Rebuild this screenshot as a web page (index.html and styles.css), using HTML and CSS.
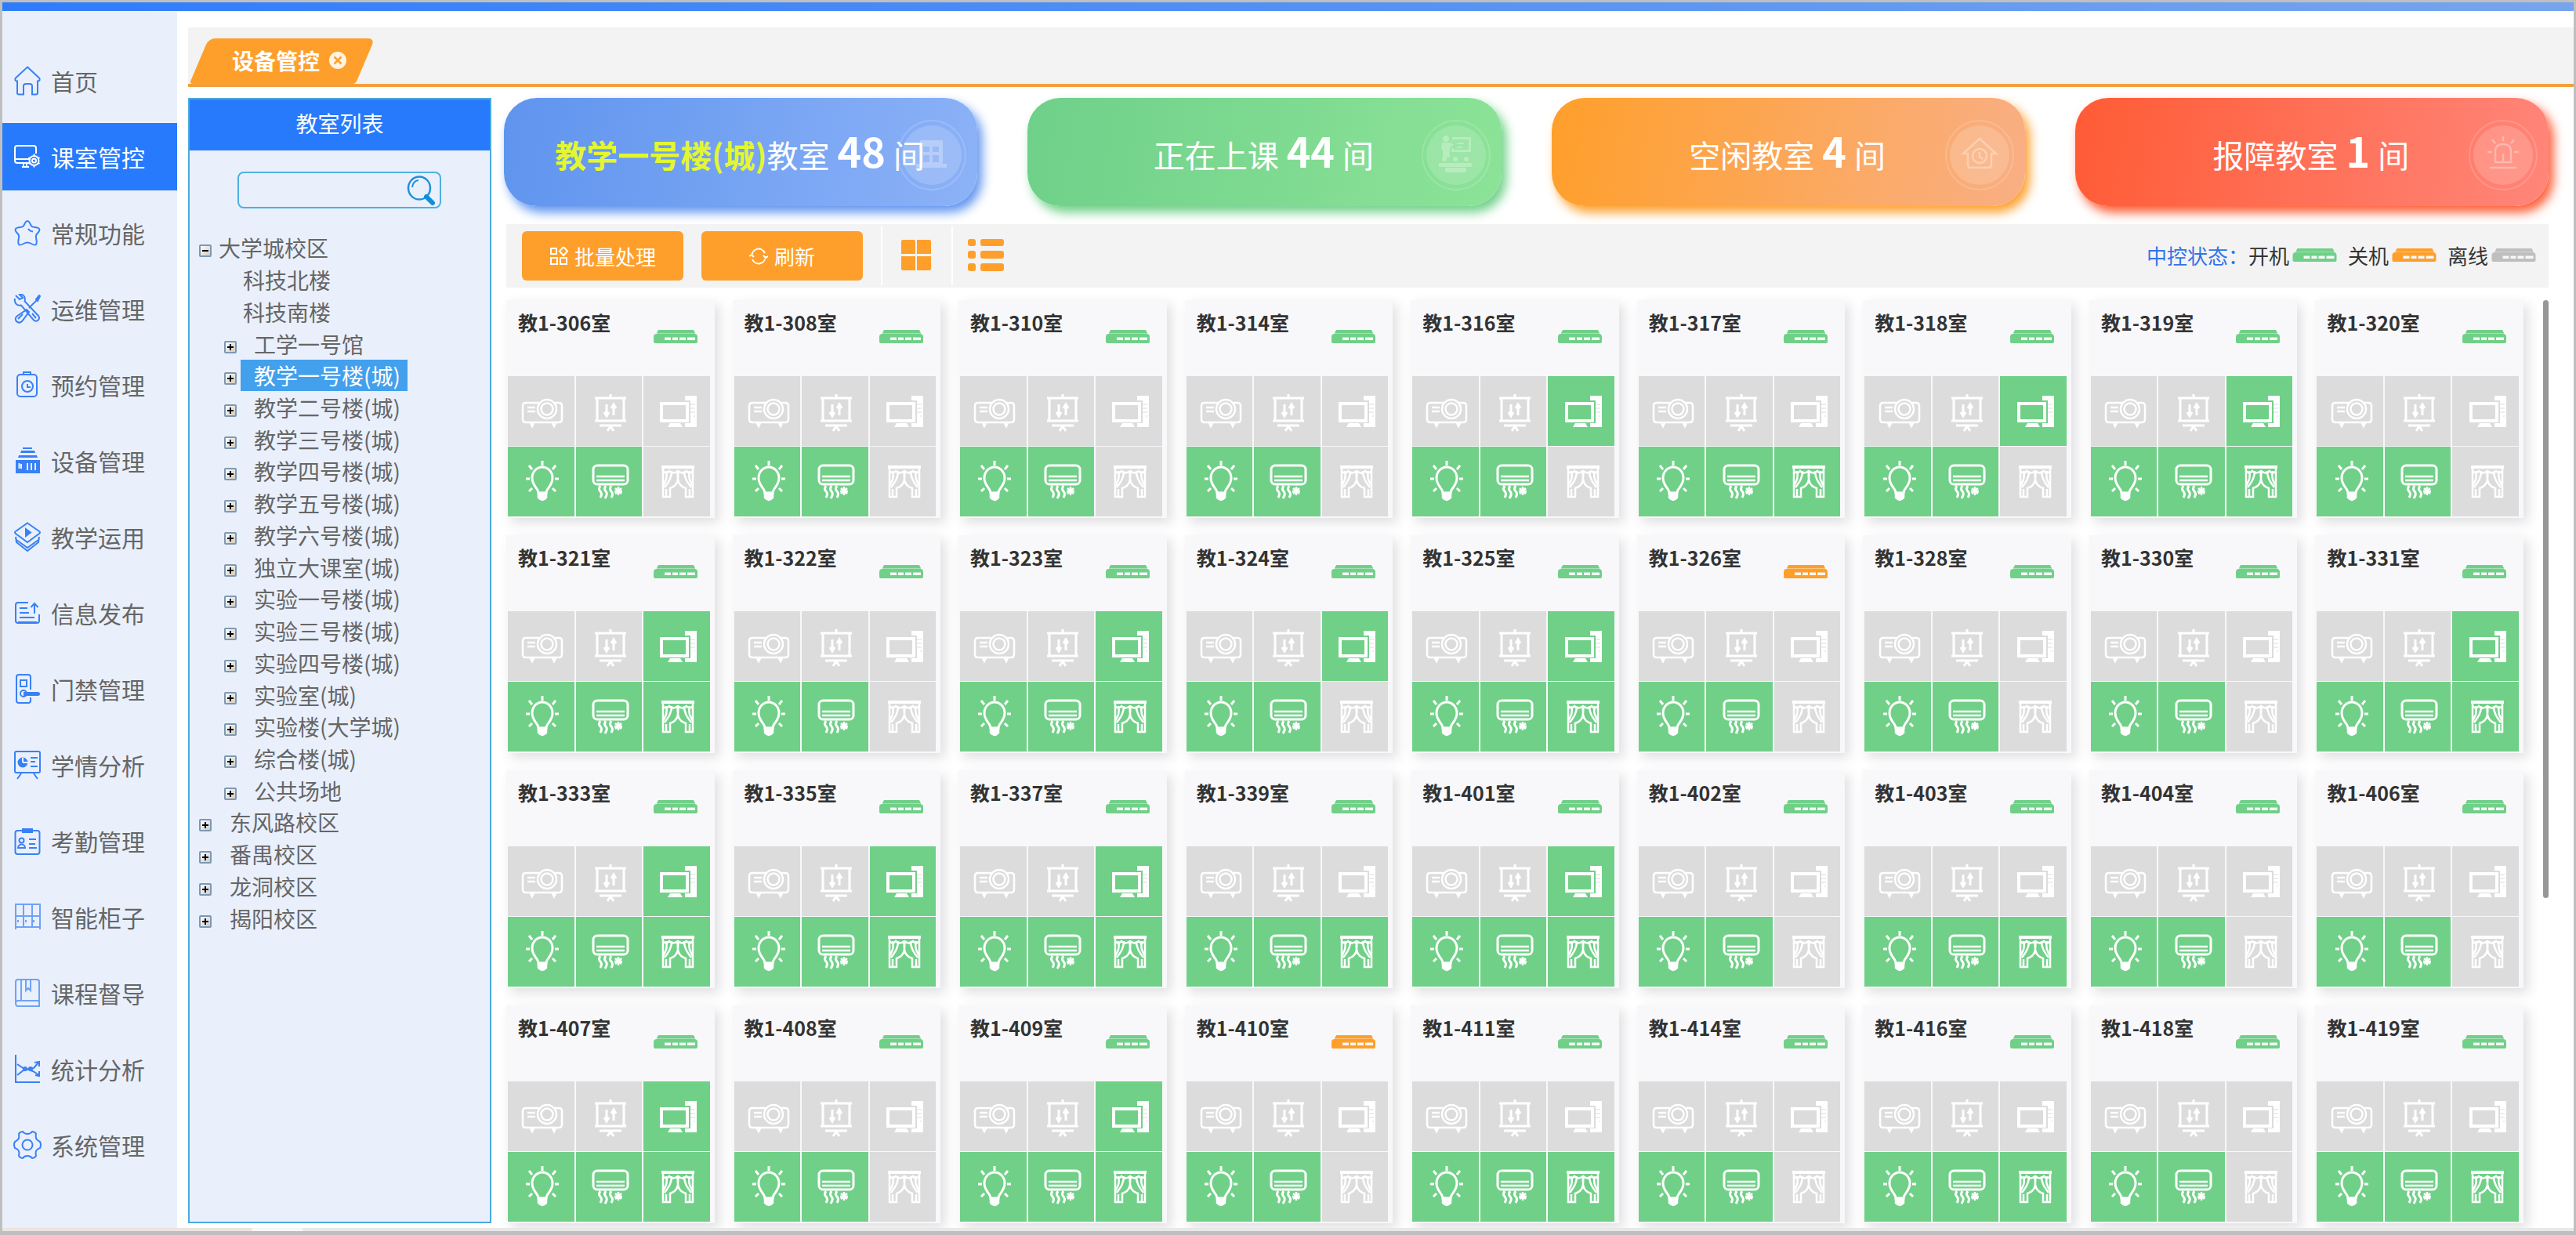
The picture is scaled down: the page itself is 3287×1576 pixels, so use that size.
FILE: index.html
```html
<!DOCTYPE html>
<html lang="zh-CN">
<head>
<meta charset="utf-8">
<title>设备管控</title>
<link rel="stylesheet" href="styles.css">
</head>
<body>
<svg class="sprite" aria-hidden="true">
  <symbol id="home" viewBox="0 0 36 38"><path d="M18 1.5 33 15.5c1.5 1.5.5 4-1.500 4H31v15q0 2-2 2h-5V26q0-3-3-3h-5q-3 0-3 3v10.500H7q-2 0-2-2v-15h-.5c-2 0-3-2.500-1.500-4z"/></symbol>
  <symbol id="control" viewBox="0 0 36 38"><path d="M21 27H5q-3 0-3-3V8q0-3 3-3h21q3 0 3 3v7M2 22h18M11 32h9M13 27v5M17 27v5"/><circle cx="26.500" cy="24" r="6"/><circle cx="26.500" cy="24" r="2.500"/><path d="M26.500 15.500v3M26.500 29.500v3M19.500 20l2 1.500M31.500 26.500l2 1.500M19.500 28l2-1.500M31.500 21.500l2-1.500"/></symbol>
  <symbol id="star" viewBox="0 0 36 38"><path d="M18 4c2 0 3 2 4.500 5.500.8 2 2 2.300 4.500 2.500 7 .5 8.500 3 3.500 8-2 2-2 3-1.500 5.500 2 9 0 11-6 7.500-3.500-2-6.500-2-10 0-6 3.500-8 1.500-6-7.500.5-2.500.5-3.500-1.500-5.500-5-5-3.500-7.500 3.500-8 2.500-.2 3.700-.5 4.500-2.500C15 6 16 4 18 4zM19 14q2 3 6 3.500"/></symbol>
  <symbol id="tools" viewBox="0 0 36 38"><path d="M3 2l5 5 4-2-4-4c4-1 8 2 6.500 8.500L32 28c3 4-2 9-6 5.500L10 14.500C4 16 1 11 2 6M33 2l-3 6-10 10M17 20l3 3-9 12c-4 4-11-1-7-6zM6 32l6-6M29 31l-5-6M33 2l1 1-3 6-2-2z"/></symbol>
  <symbol id="reserve" viewBox="0 0 36 38"><rect x="5" y="6" width="25" height="28" rx="4"/><path d="M13 6V3h9v3M18 18v4h4"/><circle cx="18" cy="21" r="7"/></symbol>
  <symbol id="device" viewBox="0 0 36 38"><path fill="currentColor" stroke="none" d="M12 2h12v2H12zM10 6h17l1 3H9zM7 12h23l1 3H6zM3 18h31v17H3z"/><path stroke="#e9f0fc" d="M10 23v6M18 22v9M23 22v9M28 22v9M7.500 22v7"/></symbol>
  <symbol id="teach" viewBox="0 0 36 38"><path d="M18 1.500 33 12q2 1.500 0 3L18 26 3 15q-2-1.500 0-3zM3 19l1 7 14 11 14-11 1-7M4 23l14 10 14-10"/><path fill="currentColor" d="m16 9 6 4.500-6 4.500z"/></symbol>
  <symbol id="publish" viewBox="0 0 36 38"><path d="M19 6H6q-3 0-3 3v20q0 3 3 3h24q3 0 3-3v-8M8 13h10M8 19h12M8 25h19M27 20V9M22.500 12l4.500-5 4.500 5M6 31h24"/></symbol>
  <symbol id="door" viewBox="0 0 36 38"><path d="M22 20V4q0-3-3-3H7Q4 1 4 4v30q0 3 3 3h12q3 0 3-3v-4"/><rect x="9" y="8" width="8" height="8"/><circle cx="13" cy="25" r="4"/><path d="M14 24h17q2 0 2 1.500t-2 1.500H14z" fill="currentColor"/></symbol>
  <symbol id="learn" viewBox="0 0 36 38"><rect x="2" y="2" width="32" height="27" rx="2"/><path d="M10 30l-5 7M26 30l5 7M22 10h9M22 15h6M22 21h9"/><circle cx="12" cy="16" r="5.500" fill="currentColor"/><path stroke="#e9f0fc" d="M12 16v-6M12 16h7"/></symbol>
  <symbol id="attend" viewBox="0 0 36 38"><rect x="2.500" y="6" width="31" height="30" rx="3"/><path d="M12 8V4h12v4zM20 17h9M20 23h8M20 28h10M6 28c0-6 9-6 9 0z"/><circle cx="10.500" cy="18.500" r="3"/></symbol>
  <symbol id="cabinet" viewBox="0 0 36 38"><path d="M3 3h31v29H3zM3 18h31M3 32v3M34 32v3M13 3v29M24 3v29M6 23v3M16 23v3M26 23v3" opacity=".7"/></symbol>
  <symbol id="course" viewBox="0 0 36 38"><path d="M3 32V5q0-3 3-3h24q3 0 3 3v31H6q-3 0-3-4 0-3 3-3h27M10 2v27M16 2v14l3-3 3 3V2" opacity=".7"/></symbol>
  <symbol id="stats" viewBox="0 0 36 38"><path d="M3 1v35h31M5 13l9 6 6 1 5 2 8 5M5 27l9-7 6-1 6-1 6-7M27 11l6-1v6M28 27l5 1v-6"/><circle cx="15" cy="19" r="2"/><circle cx="22" cy="19" r="2"/></symbol>
  <symbol id="gear" viewBox="0 0 36 38"><circle cx="18" cy="19" r="6.500"/><path d="M12 2q2 3 6 3t6-3q4 .5 5 3-1 5 1 7t4 3q2 4 0 8-3 1-4.500 3T29 33q-1 2.500-5 3-2-3-6-3t-6 3q-4-.5-5-3 1-5-.5-7T2 23q-2-4 0-8 2-1 4-3T7 5q1-2.500 5-3z"/></symbol>

  <symbol id="projector" viewBox="0 0 54 54"><path d="M23 17H6q-4 0-4 4v17q0 4 4 4h42q4 0 4-4V21q0-4-4-4h-5M8 23h10M8 28h10M12 43l2 4 2-4M40 43l2 4 2-4"/><circle cx="33" cy="25" r="12"/><circle cx="33" cy="25" r="7.500"/></symbol>
  <symbol id="screen" viewBox="0 0 54 54"><path stroke-width="3" d="M7 11h40M7 40h40M10 11v29M44 11v29M27 6v5M13 46h28"/><path d="M27 46v4M27 47l-4 6M27 47l4 6M22 19v14M19 29l3 5 3-5M31 33V19M28 24l3-5 3 5" stroke-width="3"/></symbol>
  <symbol id="pc" viewBox="0 0 54 54"><path d="M6 18h33v22H6z" stroke-width="4"/><path fill="currentColor" stroke="none" d="M17 43h13l3 5H14zM36 8h15v40H36v-5h7V14h-7z"/><path class="notch" d="M43 19h6M43 24h6M43 29h6M47 34h2"/></symbol>
  <symbol id="bulb" viewBox="0 0 54 54"><path d="M22 42c0-6-8-9-8-19a13 14 0 0 1 26 0c0 10-8 13-8 19zM27 1v6M10 7l4 5M44 7l-4 5M6 24h5M43 24h5M10 40l4-4M44 40l-4-4" stroke-width="3"/><path d="M22 42h10v6q-5 6-10 0z" fill="currentColor"/></symbol>
  <symbol id="ac" viewBox="0 0 54 54"><rect x="5" y="7" width="44" height="24" rx="5" stroke-width="3"/><path d="M9 21h36M9 26h36"/><path stroke-width="3" d="M14 33q-3 4 0 7t0 8M21 33q-3 4 0 7t-1 9M28 33q-3 4 0 7t0 8"/><path d="M37 34v11M33 36l8 7M41 36l-8 7M32 40h10"/></symbol>
  <symbol id="curtain" viewBox="0 0 54 54"><path d="M6 9h42" stroke-width="4"/><path d="M8 11v36h9V36c10-3 11-11 10-22M46 11v36h-9V36C27 33 26 25 27 14M12 14c2 8 0 12-4 19M19 14c0 9-4 14-9 21M42 14c-2 8 0 12 4 19M35 14c0 9 4 14 9 21M8 14q4 5 8 0 4 5 11 0 6 5 11 0 4 5 8 0M12 37v9M42 37v9"/></symbol>
  <symbol id="host" viewBox="0 0 56 17"><path fill="currentColor" d="M6 0h45l2 4H4z"/><path fill="currentColor" opacity=".6" d="M4 4h49v2H4z"/><path fill="currentColor" d="M4 5h48q4 0 4 4v6q0 2-2 2H2q-2 0-2-2V9q0-4 4-4z"/><path fill="#f8f8fa" d="M14 9.500h8V13h-8zM24 9.500h7V13h-7zM33 9.500h8V13h-8zM43 9.500h10V13H43z"/></symbol>
</svg>

<div class="topbar"></div>
<div class="app">
  <nav class="sidebar" aria-label="主菜单">
    <a href="#"><svg><use href="#home"/></svg>首页</a>
    <a href="#" class="active" aria-current="page"><svg><use href="#control"/></svg>课室管控</a>
    <a href="#"><svg><use href="#star"/></svg>常规功能</a>
    <a href="#"><svg><use href="#tools"/></svg>运维管理</a>
    <a href="#"><svg><use href="#reserve"/></svg>预约管理</a>
    <a href="#"><svg><use href="#device"/></svg>设备管理</a>
    <a href="#"><svg><use href="#teach"/></svg>教学运用</a>
    <a href="#"><svg><use href="#publish"/></svg>信息发布</a>
    <a href="#"><svg><use href="#door"/></svg>门禁管理</a>
    <a href="#"><svg><use href="#learn"/></svg>学情分析</a>
    <a href="#"><svg><use href="#attend"/></svg>考勤管理</a>
    <a href="#"><svg><use href="#cabinet"/></svg>智能柜子</a>
    <a href="#"><svg><use href="#course"/></svg>课程督导</a>
    <a href="#"><svg><use href="#stats"/></svg>统计分析</a>
    <a href="#"><svg><use href="#gear"/></svg>系统管理</a>
  </nav>

  <div class="main">
    <div class="tabs">
      <div class="tab">
        <span>设备管控</span>
        <button type="button" class="close" aria-label="关闭"><svg viewBox="0 0 22 22"><circle cx="11" cy="11" r="11" fill="#fff4e2"/><path d="M6.500 6.500l9 9M15.500 6.500l-9 9" stroke="#ff9f2b" stroke-width="2.500"/></svg></button>
      </div>
    </div>

    <div class="workspace">
      <aside class="panel">
        <h2>教室列表</h2>
        <form class="search" role="search">
          <input type="text" aria-label="搜索教室">
          <button type="submit" aria-label="搜索"><svg viewBox="0 0 38 38"><ellipse cx="16" cy="16" rx="14" ry="14.500" fill="none" stroke="#2090d8" stroke-width="2.500"/><path d="M7 15q1-8 8-9" fill="none" stroke="#2090d8" stroke-width="2"/><path d="M25 27l8 8" stroke="#0f8fd8" stroke-width="6" stroke-linecap="round"/></svg></button>
        </form>
        <ul class="tree">
          <li><button type="button" class="toggle open" aria-label="收起"></button><a href="#" class="tight">大学城校区</a></li>
          <li class="leaf"><a href="#">科技北楼</a></li>
          <li class="leaf"><a href="#">科技南楼</a></li>
          <li class="sub"><button type="button" class="toggle" aria-label="展开"></button><a href="#">工学一号馆</a></li>
          <li class="sub"><button type="button" class="toggle" aria-label="展开"></button><a href="#" class="selected">教学一号楼(城)</a></li>
          <li class="sub"><button type="button" class="toggle" aria-label="展开"></button><a href="#">教学二号楼(城)</a></li>
          <li class="sub"><button type="button" class="toggle" aria-label="展开"></button><a href="#">教学三号楼(城)</a></li>
          <li class="sub"><button type="button" class="toggle" aria-label="展开"></button><a href="#">教学四号楼(城)</a></li>
          <li class="sub"><button type="button" class="toggle" aria-label="展开"></button><a href="#">教学五号楼(城)</a></li>
          <li class="sub"><button type="button" class="toggle" aria-label="展开"></button><a href="#">教学六号楼(城)</a></li>
          <li class="sub"><button type="button" class="toggle" aria-label="展开"></button><a href="#">独立大课室(城)</a></li>
          <li class="sub"><button type="button" class="toggle" aria-label="展开"></button><a href="#">实验一号楼(城)</a></li>
          <li class="sub"><button type="button" class="toggle" aria-label="展开"></button><a href="#">实验三号楼(城)</a></li>
          <li class="sub"><button type="button" class="toggle" aria-label="展开"></button><a href="#">实验四号楼(城)</a></li>
          <li class="sub"><button type="button" class="toggle" aria-label="展开"></button><a href="#">实验室(城)</a></li>
          <li class="sub"><button type="button" class="toggle" aria-label="展开"></button><a href="#">实验楼(大学城)</a></li>
          <li class="sub"><button type="button" class="toggle" aria-label="展开"></button><a href="#">综合楼(城)</a></li>
          <li class="sub"><button type="button" class="toggle" aria-label="展开"></button><a href="#">公共场地</a></li>
          <li><button type="button" class="toggle" aria-label="展开"></button><a href="#">东风路校区</a></li>
          <li><button type="button" class="toggle" aria-label="展开"></button><a href="#">番禺校区</a></li>
          <li><button type="button" class="toggle" aria-label="展开"></button><a href="#">龙洞校区</a></li>
          <li><button type="button" class="toggle" aria-label="展开"></button><a href="#">揭阳校区</a></li>
        </ul>
      </aside>

      <section class="content">
        <div class="summary">
          <div class="stat blue">
            <svg class="medal" viewBox="0 0 88 90"><ellipse class="ring" cx="44" cy="45" rx="43" ry="44"/><ellipse class="disc" cx="44" cy="45" rx="38" ry="38"/><g fill="#fff" opacity=".28"><path fill-rule="evenodd" d="M29 26h29v30h5v5H24v-5h5zM33 34v7h8v-7zM45 34v7h8v-7zM33 45v9h8v-9zM45 45v9h8v-9z"/></g></svg>
            <p><b class="place">教学一号楼(城)</b>教室 <b class="num">48</b> 间</p>
          </div>
          <div class="stat green">
            <svg class="medal" viewBox="0 0 88 90"><ellipse class="ring" cx="44" cy="45" rx="43" ry="44"/><ellipse class="disc" cx="44" cy="45" rx="38" ry="38"/><g fill="#fff" opacity=".28"><circle cx="31" cy="24" r="4"/><path d="M26 29h11l4 3-5 3v13h-9V38l-2-1zM39 22h24v19H38v-5h3v2h19V25H39zM45 29h9v2h-9zM45 34h7v2h-7z"/><circle cx="29" cy="50" r="3"/><circle cx="43" cy="50" r="3"/><circle cx="57" cy="50" r="3"/><path d="M22 55h42v5H22zM30 61h27v6H30z"/></g></svg>
            <p>正在上课 <b class="num">44</b> 间</p>
          </div>
          <div class="stat orange">
            <svg class="medal" viewBox="0 0 88 90"><ellipse class="ring" cx="44" cy="45" rx="43" ry="44"/><ellipse class="disc" cx="44" cy="45" rx="38" ry="38"/><g fill="none" stroke="#fff" stroke-width="2.500" opacity=".32"><path d="M23 43l21-19 21 19h-6v14q0 4-4 4H33q-4 0-4-4V43z"/><circle cx="44" cy="46" r="9"/><path d="M44 41v6l4 3"/></g></svg>
            <p>空闲教室 <b class="num">4</b> 间</p>
          </div>
          <div class="stat red">
            <svg class="medal" viewBox="0 0 88 90"><ellipse class="ring" cx="44" cy="45" rx="43" ry="44"/><ellipse class="disc" cx="44" cy="45" rx="38" ry="38"/><g fill="none" stroke="#fff" stroke-width="2.500" opacity=".32"><path d="M34 54V40q0-9 10-9t10 9v14zM27 61h34M44 54V43M44 27v-6M34 30l-4-5M54 30l4-5M30 41h-6M58 41h6"/></g></svg>
            <p>报障教室 <b class="num">1</b> 间</p>
          </div>
        </div>

        <div class="toolbar">
          <button type="button" class="action"><svg viewBox="0 0 24 24"><path d="M2 2h7v7H2zM2 14h8v8H2zM14 14h8v8h-8zM18 0l5 5.500-5 5.500-5-5.500z"/></svg>批量处理</button>
          <button type="button" class="action"><svg viewBox="0 0 24 24"><path d="M3 12a9 10 0 0 1 17-4M21 12a9 10 0 0 1-17 4M0 12l3-2 3 3M24 12l-3 2-3-3"/></svg>刷新</button>
          <div class="views">
            <button type="button" aria-label="网格视图"><svg viewBox="0 0 46 42"><path d="M5 2h14q2 0 2 2v16H3V4q0-2 2-2zM23 2h16q2 0 2 2v16H23zM3 23h18v18H5q-2 0-2-2zM23 23h18v16q0 2-2 2H23z"/></svg></button>
            <button type="button" aria-label="列表视图"><svg viewBox="0 0 46 42"><rect x="0" y="1" width="10" height="9" rx="3"/><rect x="16" y="1" width="30" height="9" rx="3"/><rect x="0" y="16" width="10" height="10" rx="3"/><rect x="16" y="16" width="30" height="10" rx="3"/><rect x="0" y="32" width="10" height="10" rx="3"/><rect x="16" y="32" width="30" height="10" rx="3"/></svg></button>
          </div>
          <div class="legend">
            <strong>中控状态：</strong>
            <span class="on">开机<svg><use href="#host"/></svg></span>
            <span class="off">关机<svg><use href="#host"/></svg></span>
            <span class="offline">离线<svg><use href="#host"/></svg></span>
          </div>
        </div>

        <div class="scroller">
          <div class="rooms" id="rooms"></div>
          <div class="scrollbar"></div>
        </div>
      </section>
    </div>
  </div>
</div>
<div class="statusbar"></div>
<script src="rooms.js"></script>
</body>
</html>
```
FILE: styles.css
```css
* { box-sizing: border-box; }

body {
  margin: 0;
  min-height: 100vh;
  display: flex;
  flex-direction: column;
  border: 3px solid #bfbfbf;
  border-bottom-width: 5px;
  background: #fff;
  color: #333;
  font-family: "Noto Sans CJK SC", "Noto Sans", sans-serif;
}

button { padding: 0; border: 0; background: none; font: inherit; color: inherit; }
a { color: inherit; text-decoration: none; }
svg { display: block; flex: none; }
.sprite { position: absolute; width: 0; height: 0; }

.topbar { height: 11px; background: linear-gradient(90deg, #2f7cfb, #76a5ee); }
.app { flex: 1; display: flex; }
.statusbar { height: 4px; background: linear-gradient(90deg, #ece4e2 0 318px, #f8f6f6 318px 383px, #e8e8e8 383px); }

/* main menu */
.sidebar {
  width: 223px;
  flex: none;
  display: flex;
  flex-direction: column;
  gap: 11px;
  padding-top: 46px;
  background: #e9f0fc;
}
.sidebar a {
  height: 86px;
  display: flex;
  align-items: center;
  gap: 12px;
  padding-left: 14px;
  font-size: 30px;
  color: #666;
}
.sidebar svg {
  width: 36px;
  height: 38px;
  color: #3a80f5;
  fill: none;
  stroke: currentColor;
  stroke-width: 2;
}
.sidebar .active, .sidebar .active svg { color: #fff; }
.sidebar .active { background: #287afc; }

.main { flex: 1; min-width: 0; margin-left: 14px; }

/* tab strip */
.tabs {
  height: 76px;
  margin-top: 21px;
  padding: 14px 14px 0;
  display: flex;
  background: #f3f3f3;
  border-bottom: 4px solid #f2a03d;
}
.tab {
  position: relative;
  z-index: 0;
  display: flex;
  align-items: center;
  gap: 12px;
  padding: 0 24px 2px 42px;
  font-size: 28px;
  font-weight: bold;
  color: #fff;
}
.tab::before {
  content: "";
  position: absolute;
  inset: 0;
  z-index: -1;
  border-radius: 8px 8px 4px 4px;
  background: #ff9f2b;
  transform: skewX(-23deg);
}
.close svg { width: 22px; height: 22px; }

.workspace { display: flex; gap: 16px; padding: 14px 32px 6px 0; }

/* classroom tree */
.panel { width: 387px; flex: none; border: 2px solid #4aa9e0; background: #e9f0fc; }
.panel h2 {
  margin: 0;
  height: 65px;
  line-height: 60px;
  text-align: center;
  font-size: 28px;
  font-weight: normal;
  color: #fff;
  background: #287afc;
}
.search {
  width: 260px;
  height: 47px;
  margin: 27px 0 0 61px;
  display: flex;
  align-items: center;
  border: 2px solid #4fb0e0;
  border-radius: 8px;
}
.search input { flex: 1; min-width: 0; height: 40px; border: 0; outline: 0; padding: 0 8px; background: none; font: inherit; font-size: 24px; }
.search svg { width: 38px; height: 38px; margin-right: 4px; }
.tree {
  list-style: none;
  margin: 30px 0 0;
  padding: 0 0 0 12px;
  height: 896px;
  display: grid;
  grid-auto-rows: 1fr;
  font-size: 28px;
  line-height: 40px;
  color: #666;
}
.tree li { display: flex; align-items: center; gap: 15px; }
.tree a { padding: 0 8px; white-space: nowrap; }
.tree .tight { margin-left: -14px; }
.tree .sub { padding-left: 32px; gap: 5px; }
.tree .sub a { padding: 0 9px 0 17px; }
.tree .leaf { padding-left: 48px; }
.tree .selected { background: #43a0ec; color: #fff; }
.toggle {
  width: 16px;
  height: 16px;
  margin-top: 8px;
  border: 2px solid #7d98b5;
  border-radius: 2px;
  background:
    linear-gradient(#000, #000) center / 8px 2px no-repeat,
    linear-gradient(#000, #000) center / 2px 8px no-repeat,
    linear-gradient(135deg, #fff, #cfccc2);
}
.toggle.open {
  background:
    linear-gradient(#000, #000) center / 8px 2px no-repeat,
    linear-gradient(135deg, #fff, #cfccc2);
}

.content { flex: 1; min-width: 0; }

/* summary cards */
.summary { display: grid; grid-template-columns: repeat(4, 1fr); gap: 64px; }
.stat {
  position: relative;
  height: 138px;
  display: flex;
  align-items: center;
  justify-content: center;
  border-radius: 42px;
  color: #fff;
  font-size: 40px;
}
.stat p { position: relative; margin: 0; padding-right: 2px; line-height: 60px; white-space: nowrap; }
.stat .num { margin: 0 1px; font-size: 52px; line-height: 60px; }
.stat .place { color: #e3f632; }
.medal { position: absolute; right: 14px; top: 28px; width: 88px; height: 90px; }
.medal .ring { fill: none; stroke: #fff; stroke-width: 2; opacity: .16; }
.medal .disc { fill: #fff; opacity: .16; }
.blue { background: linear-gradient(100deg, #5f94ee, #8cb2f7); box-shadow: 6px 8px 14px #5f94ee; }
.green { background: linear-gradient(100deg, #6fd089, #8ce398); box-shadow: 6px 8px 14px #6fd089; }
.orange { background: linear-gradient(100deg, #ff9f2b, #f9af85); box-shadow: 6px 8px 14px #ff9f2b; }
.red { background: linear-gradient(100deg, #ff5b35, #ff867a); box-shadow: 6px 8px 14px #ff5b35; }

/* toolbar */
.toolbar {
  position: relative;
  height: 81px;
  margin: 23px 0 16px 3px;
  padding: 0 16px 0 20px;
  display: flex;
  align-items: center;
  background: #f3f3f3;
  font-size: 26px;
  line-height: 36px;
}
.action {
  width: 206px;
  height: 63px;
  margin-right: 23px;
  display: flex;
  align-items: center;
  justify-content: center;
  gap: 8px;
  border-radius: 6px;
  background: #ff9f2b;
  color: #fff;
}
.action svg { width: 24px; height: 24px; fill: none; stroke: #fff; stroke-width: 2; }
.views { align-self: stretch; display: flex; padding: 3px 0; }
.views button { width: 90px; display: grid; place-items: center; padding-bottom: 4px; border-left: 2px solid #fff; }
.views button + button { width: 110px; padding-right: 24px; }
.views svg { width: 46px; height: 42px; fill: #ff9f2b; }
.legend { margin-left: auto; padding-bottom: 2px; display: flex; align-items: center; }
.legend strong { font-weight: normal; color: #2f74e8; }
.legend span { display: flex; align-items: center; gap: 4px; margin-left: 14px; }
.legend strong + span { margin-left: 0; }
.legend svg { width: 57px; height: 17px; }
.on svg, .host.on { color: #70d088; }
.off svg, .host.off { color: #ff9f2b; }
.offline svg { color: #bfbfbf; }

/* classrooms */
.scroller { display: flex; gap: 25px; margin-left: 3px; }
.rooms { flex: 1; display: grid; grid-template-columns: repeat(9, 1fr); gap: 22px 23px; }
.scrollbar { width: 7px; height: 763px; border-radius: 4px; background: #979797; }
.room { padding: 0 6px 2px 2px; background: #f8f8fa; box-shadow: 6px 6px 14px rgba(60, 60, 80, .16); }
.room header { height: 97px; padding: 10px 16px 0 13px; display: flex; align-items: flex-start; justify-content: space-between; }
.room h3 { margin: 0; font-size: 25px; line-height: 36px; color: #333; white-space: nowrap; }
.host { width: 56px; height: 17px; margin-top: 28px; }
.devices { display: grid; grid-template-columns: repeat(3, 1fr); grid-auto-rows: 89px; gap: 1px 2px; }
.devices button { display: grid; place-items: center; padding: 0 0 2px 4px; background: #dcdcdc; color: #fff; }
.devices button.on { background: #70d088; }
.devices svg { width: 54px; height: 54px; fill: none; stroke: currentColor; stroke-width: 2.5; color: #fff; }
.notch { stroke: #dcdcdc; stroke-width: 1; }
.on .notch { stroke: #70d088; }
```
FILE: rooms.js
```js
// [room number, computer on, curtain on, host powered off]
const rooms = [
  [306], [308], [310], [314], [316, 1], [317, 0, 1], [318, 1], [319, 1, 1], [320],
  [321, 1, 1], [322], [323, 1, 1], [324, 1], [325, 1, 1], [326, 0, 0, 1], [328], [330], [331, 1, 1],
  [333, 1, 1], [335, 1, 1], [337, 1, 1], [339, 0, 1], [401, 1, 1], [402], [403, 0, 1], [404], [406],
  [407, 1, 1], [408], [409, 1, 1], [410, 0, 0, 1], [411, 0, 1], [414], [416, 0, 1], [418], [419, 0, 1]
];

const tile = (icon, label, on) =>
  `<button type="button" class="${on ? 'on' : ''}" aria-label="${label}"><svg><use href="#${icon}"/></svg></button>`;

document.getElementById('rooms').innerHTML = rooms.map(([no, pc, curtain, off]) => `
  <article class="room">
    <header><h3>教1-${no}室</h3><svg class="host ${off ? 'off' : 'on'}"><use href="#host"/></svg></header>
    <div class="devices">
      ${tile('projector', '投影机')}${tile('screen', '幕布')}${tile('pc', '电脑', pc)}
      ${tile('bulb', '灯光', 1)}${tile('ac', '空调', 1)}${tile('curtain', '窗帘', curtain)}
    </div>
  </article>`).join('');
```
